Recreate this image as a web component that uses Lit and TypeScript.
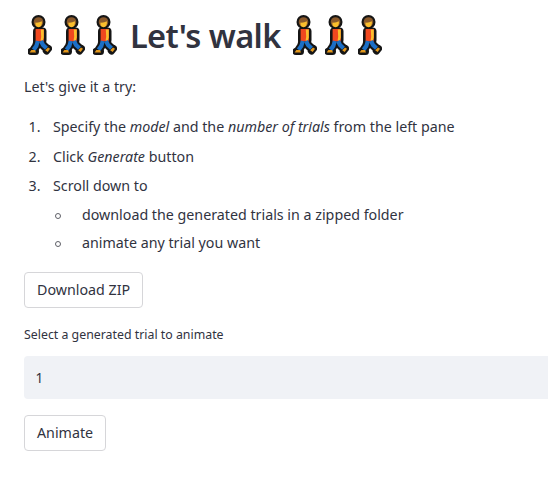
import { LitElement, html, css } from "lit";
import { customElement } from "lit/decorators.js";

const walker = html`<svg class="walker" viewBox="0 0 24 40" width="24" height="40" aria-hidden="true">
  <g fill="none" stroke="#151515" stroke-linecap="round" stroke-linejoin="round">
    <path d="M9.8 25.500 8.300 31 5.300 35.500" stroke-width="8.400"/>
    <path d="M12.500 25.500 15 30 18.800 33.800" stroke-width="8.400"/>
    <path d="M3 36.500H7.500" stroke-width="7"/>
    <path d="M20.500 33.500 18.500 36" stroke-width="7"/>
    <path d="M9 16.500H14.500V25H9z" stroke-width="8" fill="#151515"/>
  </g>
  <circle cx="10.500" cy="7" r="7" fill="#151515"/>
  <circle cx="10.500" cy="7" r="4.800" fill="#8b5a2b"/>
  <path d="M7.500 7.600c2.300.2 4.600-.3 6.300-1.300.6 3.200-1 6-3.200 6S7 10.200 7.500 7.600z" fill="#fbbf2d"/>
  <path d="M7.600 14h8.200v12.500H7.600z" fill="#f0481f"/>
  <path d="M12.800 14.500h3v8l-1 3.600-2.200-.7.600-3.700z" fill="#fbbf2d"/>
  <g fill="none" stroke="#1c6fc6" stroke-width="4.200">
    <path d="M9.800 26 8.300 31 5.600 34.700"/>
    <path d="M13 26 15 30 18.500 33.300"/>
  </g>
  <path d="M3.300 35h3.700l1 2.500H1.700z" fill="#e3981c"/>
  <path d="M20 32.500l2 1.300-2.300 3.200-2.500-1.700z" fill="#e3981c"/>
</svg>`;

@customElement("app-root")
export class AppRoot extends LitElement {
  static styles = css`
    :host {
      display: block;
      width: 548px;
      height: 482px;
      box-sizing: border-box;
      padding: 10px 0 0 24px;
      background: #fff;
      color: #31333f;
      font-family: "Noto Sans", "Open Sans", sans-serif;
      font-size: 14.25px;
      overflow: hidden;
    }
    h1 {
      margin: 0;
      height: 50px;
      display: flex;
      align-items: center;
      font-size: 32.6px;
      font-weight: 600;
      letter-spacing: -0.6px;
    }
    .walkers { display: flex; gap: 8.7px; }
    .walkers.first { margin-left: 4px; }
    .title { margin: 0 12px 0 12.5px; }
    .walker { display: block; }
    p { margin: 17px 0 0; line-height: 20px; }
    ol, ul { margin: 0; padding: 0; list-style: none; }
    ol { margin-top: 20px; counter-reset: step; }
    ul { grid-column: 2; }
    li {
      display: grid;
      grid-template-columns: 29px 1fr;
      line-height: 20px;
      margin-top: 9.5px;
    }
    ol > li { counter-increment: step; }
    ol > li:first-child { margin-top: 0; }
    ol > li::before { content: counter(step) "."; padding-left: 4.5px; }
    ul > li:first-child { margin-top: 8.5px; }
    ul li + li { margin-top: 8.5px; }
    ul li::before {
      content: "";
      box-sizing: border-box;
      width: 6px;
      height: 6px;
      margin: 8px 0 0 2px;
      border: 1.3px solid #5f6068;
      border-radius: 50%;
    }
    button {
      display: block;
      font: inherit;
      color: inherit;
      background: #fff;
      border: 1px solid #d6d6d9;
      border-radius: 4px;
      height: 36px;
      padding: 0 12px 2px;
    }
    .dl { margin-top: 19px; }
    label { display: block; margin-top: 19px; font-size: 12.35px; line-height: 16px; }
    .select {
      margin-top: 13px;
      height: 43px;
      display: flex;
      align-items: center;
      padding-left: 11.5px;
      background: #f0f2f6;
      border-radius: 4px 0 0 4px;
      font-size: 13.6px;
    }
    .go { margin-top: 16px; }
  `;

  render() {
    return html`
      <h1>
        <span class="walkers first">${walker}${walker}${walker}</span>
        <span class="title">Let's walk</span>
        <span class="walkers">${walker}${walker}${walker}</span>
      </h1>
      <p>Let's give it a try:</p>
      <ol>
        <li><span>Specify the <em>model</em> and the <em>number of trials</em> from the left pane</span></li>
        <li><span>Click <em>Generate</em> button</span></li>
        <li>
          <span>Scroll down to</span>
          <ul>
            <li><span>download the generated trials in a zipped folder</span></li>
            <li><span>animate any trial you want</span></li>
          </ul>
        </li>
      </ol>
      <button class="dl">Download ZIP</button>
      <label>Select a generated trial to animate</label>
      <div class="select">1</div>
      <button class="go">Animate</button>
    `;
  }
}
